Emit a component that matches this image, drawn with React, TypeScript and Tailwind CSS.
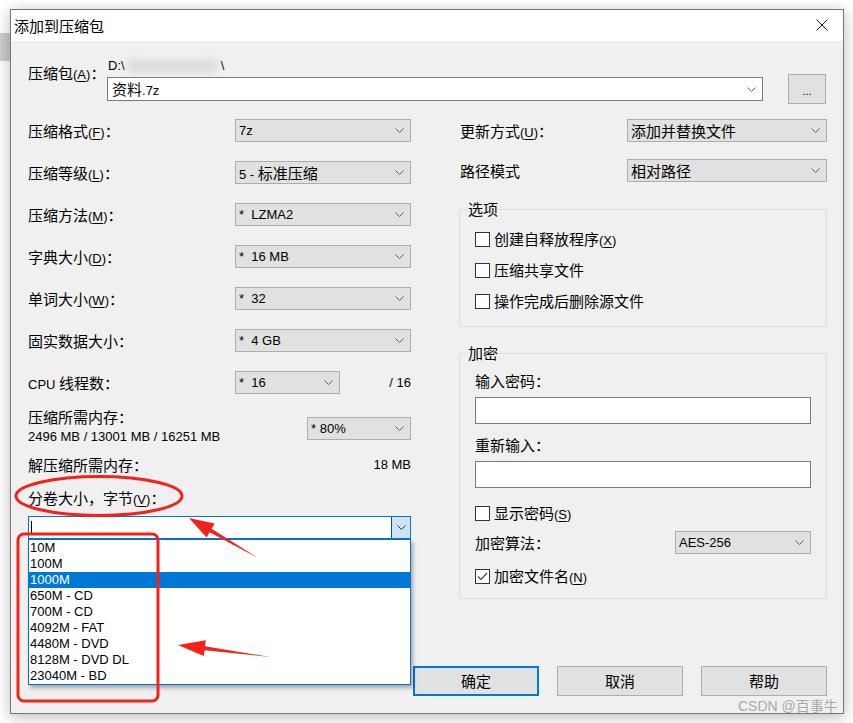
import React from "react";

const ZH = "text-[15px] leading-[20px] font-['Noto_Sans_CJK_SC',sans-serif]";
const EN = "text-[13px] leading-[20px] font-['Liberation_Sans','Noto_Sans_CJK_SC',sans-serif]";

function Txt({ s }: { s: string }) {
  const parts = s.split(/([\u2E80-\u9FFF\uFF00-\uFFEF\u3000-\u303F]+)/).filter((p) => p.length > 0);
  return (
    <>
      {parts.map((p, i) =>
        /[\u2E80-\u9FFF\uFF00-\uFFEF\u3000-\u303F]/.test(p) ? (
          <span key={i} className={ZH}>
            {p}
          </span>
        ) : (
          <span key={i} className={EN + " whitespace-pre"}>
            {p}
          </span>
        )
      )}
    </>
  );
}

function Line({ children, className = "" }: { children: React.ReactNode; className?: string }) {
  return (
    <span className={"inline-flex h-[20px] items-baseline whitespace-nowrap text-black " + className}>
      {children}
    </span>
  );
}

function Label({ t, k, colon = true }: { t: string; k?: string; colon?: boolean }) {
  return (
    <Line>
      <Txt s={t} />
      {k && (
        <span className={EN}>
          (<span className="underline underline-offset-2">{k}</span>)
        </span>
      )}
      {colon && <span className={ZH}>：</span>}
    </Line>
  );
}

function Chevron({ color = "#606060" }: { color?: string }) {
  return (
    <svg width="9" height="5" viewBox="0 0 9 5" className="shrink-0">
      <path d="M0.5 0.5 L4.5 4.5 L8.5 0.5" stroke={color} strokeWidth="1" fill="none" />
    </svg>
  );
}

function Select({ value, className }: { value: string; className: string }) {
  return (
    <div
      className={
        "flex h-[23px] items-center justify-between border border-[#adadad] bg-[#e1e1e1] pl-[3px] pr-[6px] text-black " +
        className
      }
    >
      <Line>
        <Txt s={value} />
      </Line>
      <Chevron />
    </div>
  );
}

function Check({ checked = false }: { checked?: boolean }) {
  return (
    <div className="flex h-[15px] w-[15px] shrink-0 items-center justify-center border border-[#333333] bg-white">
      {checked && (
        <svg width="13" height="13" viewBox="0 0 13 13">
          <path d="M2 6.5 L5 9.5 L11 3" stroke="#444" strokeWidth="1.2" fill="none" />
        </svg>
      )}
    </div>
  );
}

function CheckRow({ t, k, checked }: { t: string; k?: string; checked?: boolean }) {
  return (
    <div className="flex h-[20px] items-center gap-[4px]">
      <Check checked={checked} />
      <Label t={t} k={k} colon={false} />
    </div>
  );
}

function Row({ label, children }: { label: React.ReactNode; children: React.ReactNode }) {
  return (
    <div className="flex h-[23px] items-center justify-between">
      {label}
      {children}
    </div>
  );
}

const items = ["10M", "100M", "1000M", "650M - CD", "700M - CD", "4092M - FAT", "4480M - DVD", "8128M - DVD DL", "23040M - BD"];

export default function App() {
  return (
    <div className="relative h-[723px] w-[853px] overflow-hidden bg-white pl-[10px] pt-[9px] font-['Liberation_Sans','Noto_Sans_CJK_SC',sans-serif]">
      <div className="absolute left-0 top-[33px] h-[28px] w-[12px] bg-[#cdcdcd]" />
      <div className="relative flex h-[705px] w-[834px] flex-col border border-[#767676] bg-[#f0f0f0] shadow-[0_3px_14px_rgba(0,0,0,0.28)]">
        {/* title bar */}
        <div className="flex h-[31px] shrink-0 items-center justify-between bg-white pl-[3px] pr-[15px]">
          <span className={ZH + " text-black"}>添加到压缩包</span>
          <svg width="12" height="12" viewBox="0 0 12 12" className="mb-[1px]">
            <path d="M0.5 0.5 L11.5 11.5 M11.5 0.5 L0.5 11.5" stroke="#111" strokeWidth="1" />
          </svg>
        </div>

        {/* body */}
        <div className="flex flex-1 flex-col pl-[17px] pr-[15px]">
          {/* archive row */}
          <div className="mt-[17px] flex items-start">
            <div className="flex w-[79px] shrink-0 pt-[5px]">
              <Label t="压缩包" k="A" />
            </div>
            <div className="flex w-[656px] flex-col">
              <div className="flex h-[15px] items-center pl-[1px] text-[13px] leading-[15px] text-black">
                <span>D:\</span>
                <span className="ml-[2px] inline-block h-[14px] w-[92px] rounded-full bg-[#dddddd] blur-[3px]" />
                <span className="ml-[2px]">\</span>
              </div>
              <div className="mt-[4px] flex h-[24px] items-center justify-between border border-[#7a7a7a] bg-white pl-[4px] pr-[6px]">
                <Line>
                  <Txt s="资料.7z" />
                </Line>
                <Chevron />
              </div>
            </div>
            <div className="ml-[25px] mt-[16px] flex h-[30px] w-[38px] items-end justify-center border border-[#adadad] bg-[#e1e1e1] pb-[6px] text-[11px] leading-[12px] text-black">
              ...
            </div>
          </div>

          {/* columns */}
          <div className="mt-[15px] flex">
            {/* left column */}
            <div className="flex w-[383px] shrink-0 flex-col">
              <div className="flex flex-col gap-[19px]">
                <Row label={<Label t="压缩格式" k="F" />}>
                  <Select value="7z" className="w-[176px]" />
                </Row>
                <Row label={<Label t="压缩等级" k="L" />}>
                  <Select value="5 - 标准压缩" className="w-[176px]" />
                </Row>
                <Row label={<Label t="压缩方法" k="M" />}>
                  <Select value="*  LZMA2" className="w-[176px]" />
                </Row>
                <Row label={<Label t="字典大小" k="D" />}>
                  <Select value="*  16 MB" className="w-[176px]" />
                </Row>
                <Row label={<Label t="单词大小" k="W" />}>
                  <Select value="*  32" className="w-[176px]" />
                </Row>
                <Row label={<Label t="固实数据大小" />}>
                  <Select value="*  4 GB" className="w-[176px]" />
                </Row>
                <div className="flex h-[23px] items-center">
                  <div className="flex w-[207px]">
                    <Label t="CPU 线程数" />
                  </div>
                  <Select value="*  16" className="w-[105px]" />
                  <Line className="ml-auto">
                    <span className={EN}>/ 16</span>
                  </Line>
                </div>
              </div>

              <div className="mt-[13px] flex items-start justify-between">
                <div className="flex flex-col">
                  <Label t="压缩所需内存" />
                  <Line>
                    <span className={EN}>2496 MB / 13001 MB / 16251 MB</span>
                  </Line>
                </div>
                <Select value="* 80%" className="mt-[10px] w-[104px]" />
              </div>

              <div className="mt-[8px] flex items-center justify-between">
                <Label t="解压缩所需内存" />
                <Line>
                  <span className={EN}>18 MB</span>
                </Line>
              </div>

              <div className="mt-[13px] flex">
                <Label t="分卷大小，字节" k="V" />
              </div>

              <div className="relative mt-[8px] flex h-[23px] items-stretch border border-[#0078d7] bg-white">
                <div className="flex flex-1 items-center pl-[2px]">
                  <div className="h-[14px] w-[1px] bg-black" />
                </div>
                <div className="flex w-[19px] items-center justify-center border-l border-[#005499] bg-[#cce4f7]">
                  <Chevron color="#333333" />
                </div>
                <div className="absolute left-[-1px] top-[22px] z-10 w-[383px] border border-[#0a6fc2] bg-white shadow-[2px_3px_4px_rgba(0,0,0,0.3)]">
                  {items.map((it) => (
                    <div
                      key={it}
                      className={
                        it === "1000M"
                          ? "h-[16px] bg-[#0078d7] pl-[1px] text-[13px] leading-[16px] text-white"
                          : "h-[16px] pl-[1px] text-[13px] leading-[16px] text-black"
                      }
                    >
                      {it}
                    </div>
                  ))}
                </div>
              </div>
            </div>

            {/* right column */}
            <div className="ml-[48px] flex w-[368px] shrink-0 flex-col">
              <Row label={<span className="flex pl-[1px]"><Label t="更新方式" k="U" /></span>}>
                <Select value="添加并替换文件" className="w-[200px]" />
              </Row>
              <div className="mt-[17px]">
                <Row label={<span className="flex pl-[1px]"><Label t="路径模式" colon={false} /></span>}>
                  <Select value="相对路径" className="w-[200px]" />
                </Row>
              </div>

              <div className="relative mt-[27px] flex h-[118px] flex-col gap-[11px] border border-[#dcdcdc] pl-[15px] pt-[19px]">
                <span className="absolute left-[7px] top-[-11px] flex bg-[#f0f0f0] px-[1px]">
                  <Label t="选项" colon={false} />
                </span>
                <CheckRow t="创建自释放程序" k="X" />
                <CheckRow t="压缩共享文件" />
                <CheckRow t="操作完成后删除源文件" />
              </div>

              <div className="relative mt-[26px] flex h-[246px] flex-col border border-[#dcdcdc] px-[15px] pt-[17px]">
                <span className="absolute left-[7px] top-[-11px] flex bg-[#f0f0f0] px-[1px]">
                  <Label t="加密" colon={false} />
                </span>
                <div className="flex h-[20px] items-center">
                  <Label t="输入密码" />
                </div>
                <div className="mt-[6px] h-[27px] border border-[#7a7a7a] bg-white" />
                <div className="mt-[11px] flex h-[20px] items-center">
                  <Label t="重新输入" />
                </div>
                <div className="mt-[6px] h-[27px] border border-[#7a7a7a] bg-white" />
                <div className="mt-[15px]">
                  <CheckRow t="显示密码" k="S" />
                </div>
                <div className="mt-[8px]">
                  <Row label={<Label t="加密算法" />}>
                    <Select value="AES-256" className="w-[136px]" />
                  </Row>
                </div>
                <div className="mt-[12px]">
                  <CheckRow t="加密文件名" k="N" checked />
                </div>
              </div>
            </div>
          </div>

          {/* buttons */}
          <div className="mt-[67px] flex justify-end gap-[18px] pr-[1px]">
            <div className="flex h-[30px] w-[126px] items-center justify-center border-2 border-[#0078d7] bg-[#e1e1e1]">
              <span className={ZH + " text-black"}>确定</span>
            </div>
            <div className="flex h-[30px] w-[126px] items-center justify-center border border-[#adadad] bg-[#e1e1e1]">
              <span className={ZH + " text-black"}>取消</span>
            </div>
            <div className="flex h-[30px] w-[126px] items-center justify-center border border-[#adadad] bg-[#e1e1e1]">
              <span className={ZH + " text-black"}>帮助</span>
            </div>
          </div>
        </div>
      </div>

      {/* watermark */}
      <div className="absolute left-[738px] top-[697px] z-20 whitespace-nowrap text-[14px] leading-[18px] text-[#a8a8a8] font-['Liberation_Sans','Noto_Sans_CJK_SC',sans-serif]">
        CSDN @百事牛
      </div>

      {/* red annotations */}
      <svg className="pointer-events-none absolute left-0 top-0 z-30" width="853" height="723" viewBox="0 0 853 723">
        <ellipse cx="99" cy="496" rx="83" ry="19.5" fill="none" stroke="#f3231b" strokeWidth="3" />
        <rect x="18" y="534" width="140" height="167" rx="6" fill="none" stroke="#f3231b" strokeWidth="3" />
        <polygon
          points="258,558 209.6,532.2 206.6,537.4 189,518 214.6,523.6 211.6,528.8"
          fill="#f3231b"
        />
        <polygon
          points="270,657 204.6,650.2 203.8,656.1 178,645 205.8,640.3 205,646.2"
          fill="#f3231b"
        />
      </svg>
    </div>
  );
}
